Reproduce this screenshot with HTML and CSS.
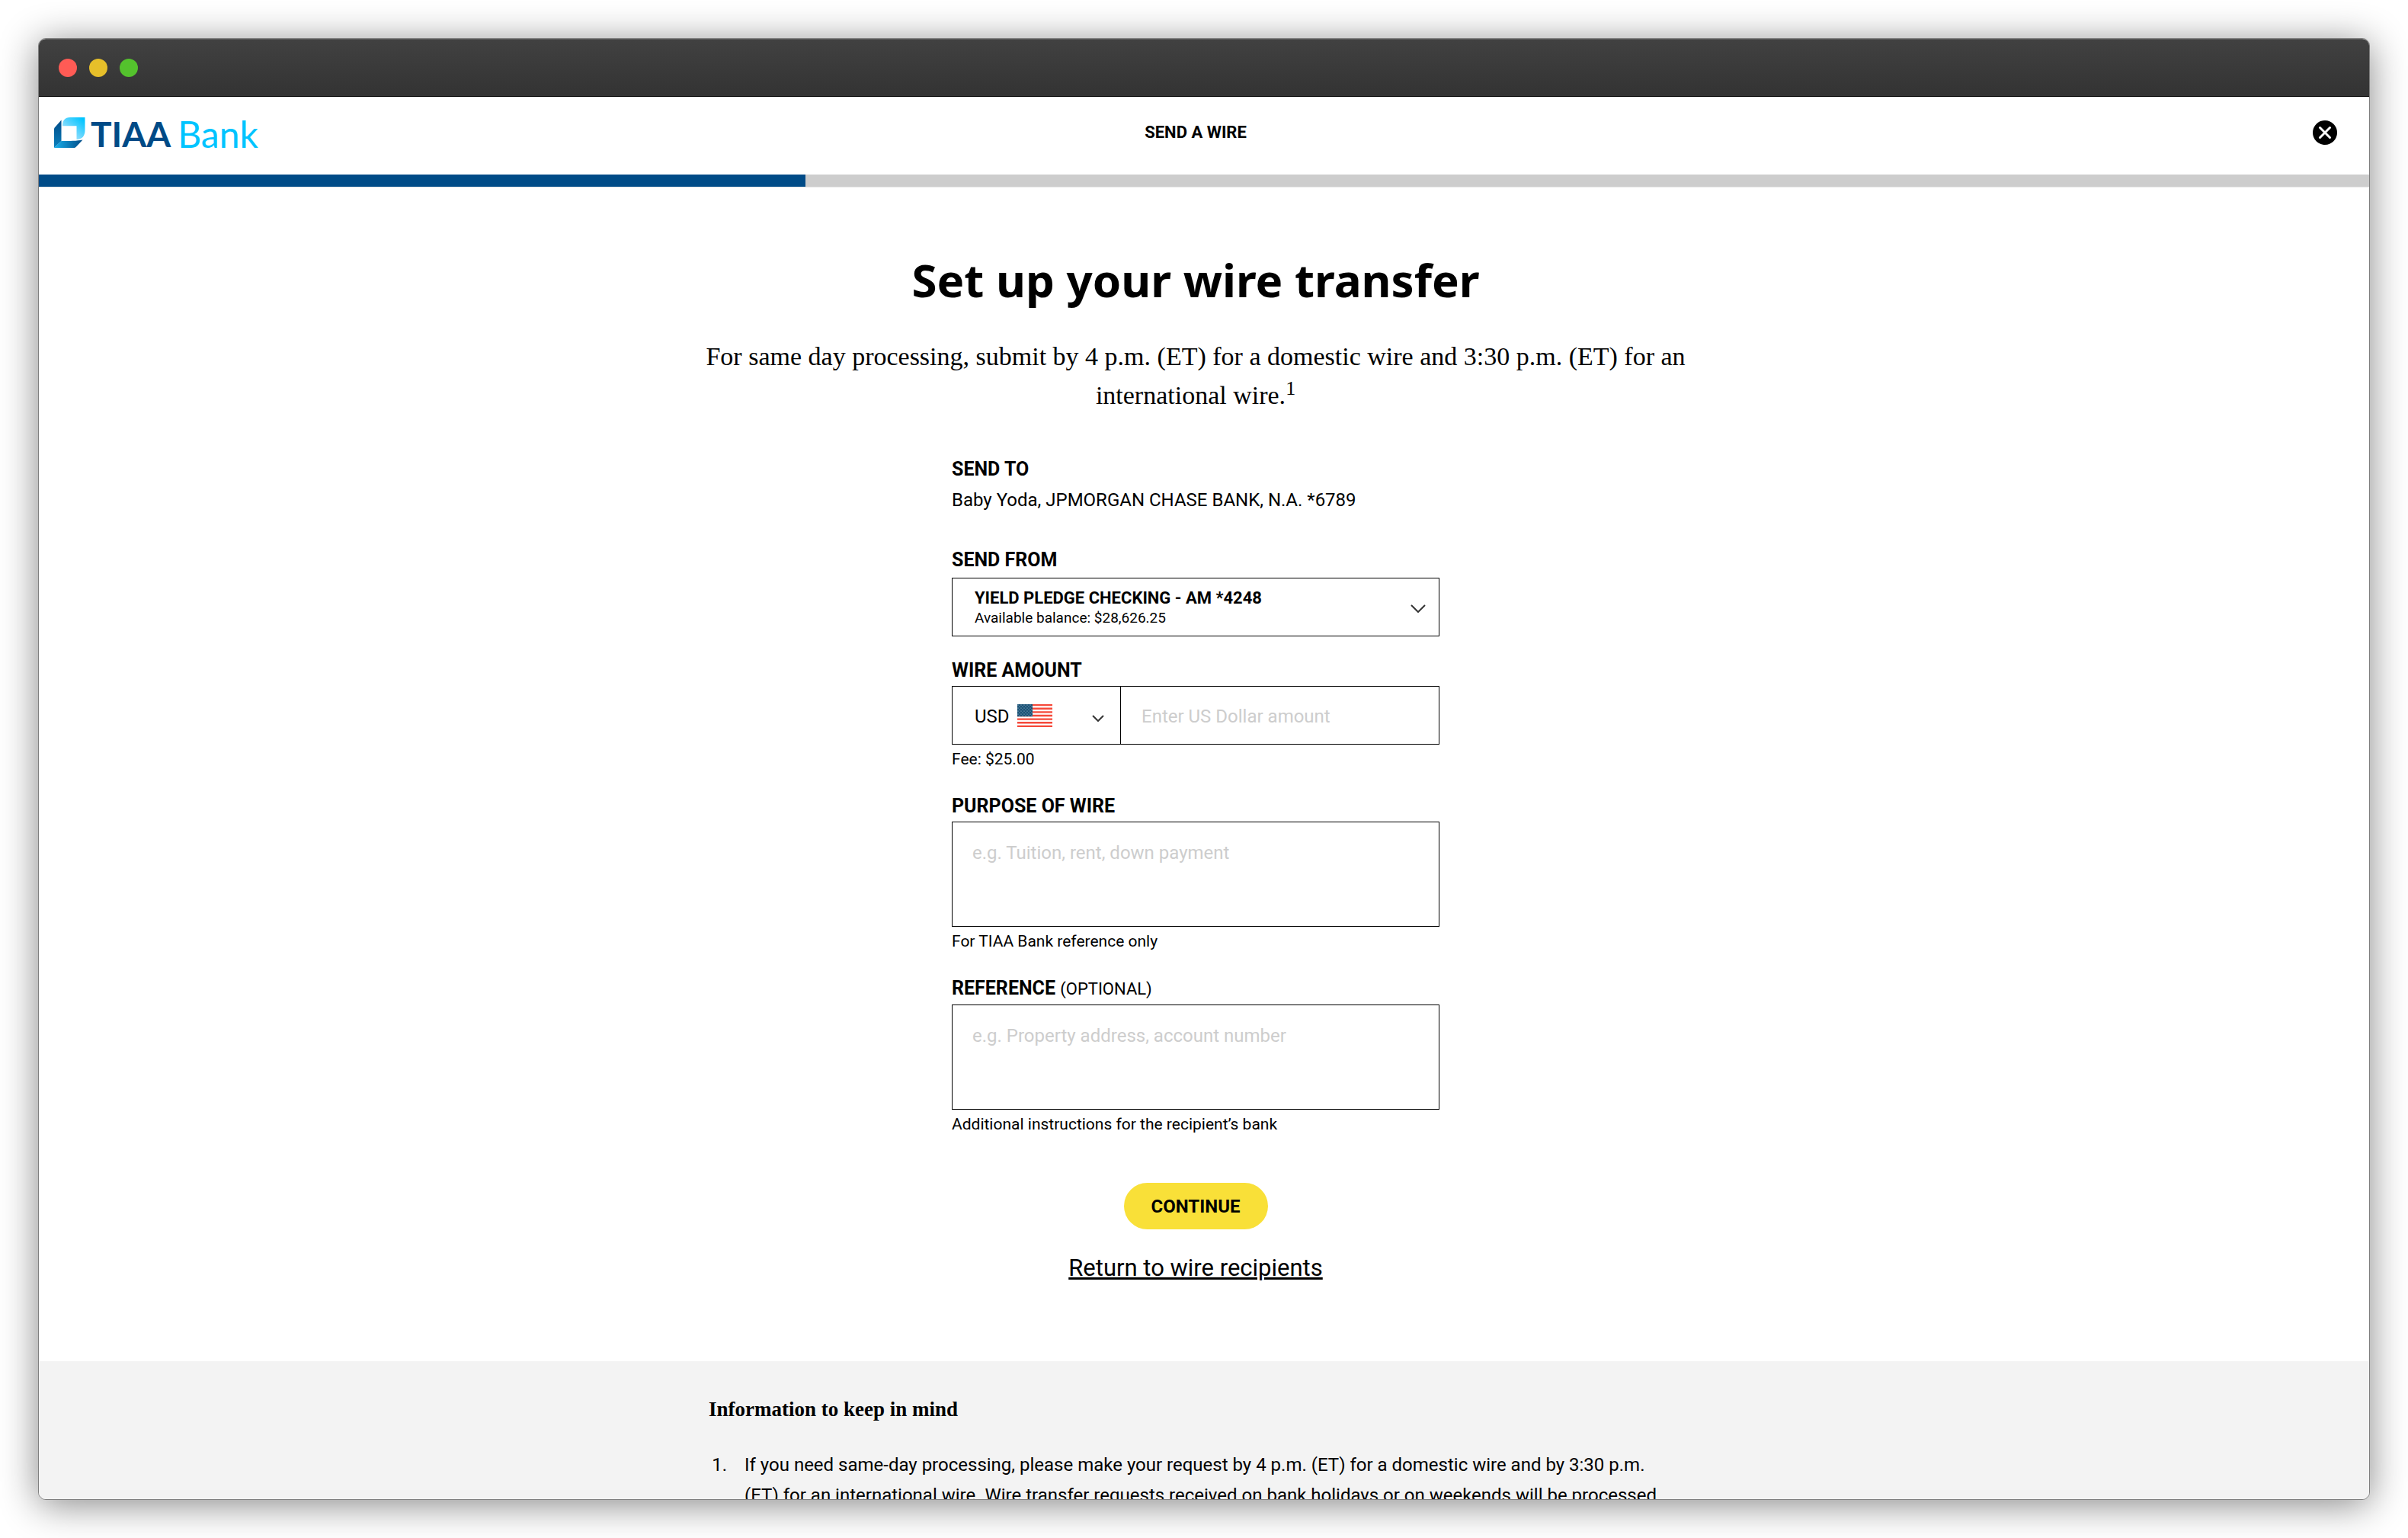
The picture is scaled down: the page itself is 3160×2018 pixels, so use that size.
FILE: index.html
```html
<!DOCTYPE html>
<html lang="en">
<head>
  <meta charset="utf-8">
  <meta name="viewport" content="width=device-width, initial-scale=1">
  <title>Send a wire - TIAA Bank</title>
  <link rel="stylesheet" href="styles.css">
</head>
<body>
  <div class="window">
    <div class="titlebar">
      <span class="light light-red"></span>
      <span class="light light-yellow"></span>
      <span class="light light-green"></span>
    </div>
    <div class="page">
      <header class="header">
        <a class="logo" href="#" aria-label="TIAA Bank">
          <svg class="logo-mark" viewBox="0 0 41 40" aria-hidden="true">
            <defs>
              <linearGradient id="mark-top" x1="1" y1="0" x2="0.2" y2="0.9">
                <stop offset="0.1" stop-color="#00c4ff"/>
                <stop offset="1" stop-color="#b4e4fd"/>
              </linearGradient>
              <linearGradient id="mark-side" x1="0" y1="0" x2="0" y2="1">
                <stop offset="0" stop-color="#004b87"/>
                <stop offset="1" stop-color="#0a80bd"/>
              </linearGradient>
              <linearGradient id="mark-base" x1="0" y1="0" x2="1" y2="0">
                <stop offset="0" stop-color="#18b0ec"/>
                <stop offset="1" stop-color="#004b87"/>
              </linearGradient>
            </defs>
            <path fill="url(#mark-top)" d="M11 11.3C11 4 14 0 21 0H40.500V17C40.500 24 37 29 29.500 29V11.300Z"/>
            <path fill="url(#mark-side)" d="M9.500 3.500V31L0 40V15.500C0 14 1 13 2 12Z"/>
            <path fill="url(#mark-base)" d="M0 40L9.500 31C20 31 30 31 37.500 29.500L29 38.500C28 39.500 27 40 25.500 40Z"/>
          </svg>
          <span class="logo-name">TIAA</span>
          <span class="logo-bank">Bank</span>
        </a>
        <p class="header-title">SEND A WIRE</p>
        <button class="close" type="button" aria-label="Close">
          <svg viewBox="0 0 32 32" aria-hidden="true">
            <circle cx="16" cy="16" r="16"/>
            <path d="M9.500 9.500L22.500 22.500M22.500 9.500L9.500 22.500" fill="none" stroke="#fff" stroke-width="3" stroke-linecap="round"/>
          </svg>
        </button>
      </header>
      <div class="progress" role="progressbar" aria-label="Wire setup" aria-valuenow="33" aria-valuemin="0" aria-valuemax="100">
        <div class="progress-bar" style="width: 32.9%"></div>
      </div>

      <main class="main">
        <h1 class="title">Set up your wire transfer</h1>
        <p class="intro">For same day processing, submit by 4 p.m. (ET) for a domestic wire and 3:30 p.m. (ET) for an international wire.<sup class="note">1</sup></p>

        <form class="form">
          <div class="recipient">
            <h2 class="label">SEND TO</h2>
            <p class="recipient-name">Baby Yoda, JPMORGAN CHASE BANK, N.A. *6789</p>
          </div>

          <div class="field field-from">
            <label class="label" for="from">SEND FROM</label>
            <div class="picker picker-account">
              <select class="box account" id="from" aria-describedby="balance">
                <option>YIELD PLEDGE CHECKING - AM *4248</option>
              </select>
              <span class="balance" id="balance">Available balance: $28,626.25</span>
              <svg class="chevron chevron-large" viewBox="0 0 20 11" aria-hidden="true"><path d="M1 1L10 10L19 1"/></svg>
            </div>
          </div>

          <div class="field">
            <label class="label" for="amount">WIRE AMOUNT</label>
            <div class="amount">
              <div class="picker">
                <select class="box currency" aria-label="Currency">
                  <option>USD</option>
                </select>
                <svg class="flag" viewBox="0 0 46 30" aria-hidden="true">
                  <defs>
                    <pattern id="stars" width="4" height="4" patternUnits="userSpaceOnUse">
                      <circle cx="1" cy="1" r="0.600" fill="#b5cfdc"/>
                      <circle cx="3" cy="3" r="0.600" fill="#b5cfdc"/>
                    </pattern>
                  </defs>
                  <path fill="#fff" d="M0 0H46V30H0Z"/>
                  <path stroke="#f5493a" stroke-width="2.308" d="M0 1.154H46M0 5.769H46M0 10.385H46M0 15H46M0 19.615H46M0 24.231H46M0 28.846H46"/>
                  <path fill="#1a5276" d="M0 0H20V16.150H0Z"/>
                  <path fill="url(#stars)" d="M0 0H20V16.150H0Z"/>
                </svg>
                <svg class="chevron chevron-small" viewBox="0 0 16 9" aria-hidden="true"><path d="M1 1L8 8L15 1"/></svg>
              </div>
              <input class="box amount-input" id="amount" type="text" placeholder="Enter US Dollar amount">
            </div>
            <p class="help">Fee: $25.00</p>
          </div>

          <div class="field">
            <label class="label" for="purpose">PURPOSE OF WIRE</label>
            <textarea class="box memo" id="purpose" placeholder="e.g. Tuition, rent, down payment"></textarea>
            <p class="help">For TIAA Bank reference only</p>
          </div>

          <div class="field">
            <label class="label" for="reference">REFERENCE <span class="optional">(OPTIONAL)</span></label>
            <textarea class="box memo" id="reference" placeholder="e.g. Property address, account number"></textarea>
            <p class="help">Additional instructions for the recipient’s bank</p>
          </div>

          <div class="actions">
            <button class="continue" type="submit">CONTINUE</button>
            <a class="return" href="#">Return to wire recipients</a>
          </div>
        </form>
      </main>

      <footer class="footer">
        <div class="footer-inner">
          <h2 class="footer-title">Information to keep in mind</h2>
          <ol class="footnotes">
            <li>If you need same-day processing, please make your request by 4 p.m. (ET) for a domestic wire and by 3:30 p.m. (ET) for an international wire. Wire transfer requests received on bank holidays or on weekends will be processed</li>
          </ol>
        </div>
      </footer>
    </div>
  </div>
</body>
</html>
```
FILE: styles.css
```css
*,
*::before,
*::after {
  box-sizing: border-box;
}

body {
  margin: 0;
  height: 100vh;
  padding: 50px;
  background: #fff;
  color: #000;
  font: 24px/40px Roboto, "Liberation Sans", sans-serif;
}

h1,
h2,
p,
ol {
  margin: 0;
}

/* Window frame */
.window {
  display: flex;
  flex-direction: column;
  height: 100%;
  overflow: hidden;
  border: 1px solid #7f7f7f;
  border-radius: 10px;
  background: #fff;
  box-shadow: 0 6px 50px rgba(0, 0, 0, 0.48);
}

.titlebar {
  display: flex;
  flex: none;
  align-items: center;
  gap: 16px;
  height: 76px;
  padding-left: 26px;
  border-top: 1px solid #5c5c5c;
  border-bottom: 1px solid #000;
  background: linear-gradient(#414141, #333);
}

.light {
  width: 24px;
  height: 24px;
  border-radius: 50%;
}

.light-red {
  background: #ff5b55;
}

.light-yellow {
  background: #e6bf2a;
}

.light-green {
  background: #54c22d;
}

.page {
  flex: 1;
  min-height: 0;
  overflow: hidden;
}

/* Header */
.header {
  display: grid;
  grid-template-columns: 1fr auto 1fr;
  align-items: center;
  height: 102px;
  padding: 0 42px 8px 20px;
}

.logo {
  display: flex;
  align-items: center;
  justify-self: start;
  font: 46px/40px Lato, sans-serif;
  text-decoration: none;
}

.logo-mark {
  width: 41px;
  height: 40px;
  margin-right: 7px;
}

.logo-name,
.logo-bank {
  padding-top: 4px;
}

.logo-name {
  margin-right: 9px;
  color: #004b87;
  font-weight: 700;
}

.logo-bank {
  color: #00c4ff;
  font-size: 48px;
}

.header-title {
  font-size: 22px;
  font-weight: 700;
}

.close {
  display: block;
  justify-self: end;
  width: 32px;
  height: 32px;
  padding: 0;
  border: 0;
  background: none;
}

.close svg {
  display: block;
}

.progress {
  height: 17px;
  border-bottom: 1px solid #e6e6e6;
  background: #cdcdcd;
}

.progress-bar {
  height: 16px;
  background: #004b87;
}

/* Main column */
.main {
  display: flex;
  flex-direction: column;
  align-items: center;
  padding: 85px 22px 102px 0;
}

.title {
  font: 700 60px/72px "Noto Sans", sans-serif;
}

.intro {
  max-width: 1300px;
  margin-top: 39px;
  font: 34px/51px "Liberation Serif", serif;
  text-align: center;
}

.note {
  font-size: 26px;
  line-height: 0;
}

.form {
  width: 640px;
  max-width: 100%;
  margin-top: 52px;
}

.label {
  display: block;
  font-size: 25px;
  font-weight: 700;
  line-height: 40px;
}

.optional {
  font-size: 22px;
  font-weight: 400;
}

.field {
  margin-top: 27px;
}

.field-from {
  margin: 39px 0 25px;
}

.field-from + .field {
  margin-top: 0;
}

.box {
  display: block;
  width: 100%;
  height: 77px;
  margin: 0;
  border: 1px solid #000;
  border-radius: 0;
  outline: 0;
  background: #fff;
  color: #000;
  font: 24px/32px Roboto, "Liberation Sans", sans-serif;
  appearance: none;
}

.box::placeholder {
  color: #cdcdcd;
  opacity: 1;
}

/* Drop-downs: the select fills the cell, its extras share it */
.picker {
  display: grid;
}

.picker > * {
  grid-area: 1 / 1;
}

.picker-account {
  margin-top: 3px;
}

.account {
  padding: 0 60px 24px 29px;
  font-size: 22px;
  font-weight: 700;
}

.balance {
  align-self: end;
  justify-self: start;
  margin: 0 0 12px 30px;
  font-size: 19px;
  line-height: 24px;
  pointer-events: none;
}

.chevron {
  align-self: center;
  justify-self: end;
  fill: none;
  stroke: #333;
  stroke-width: 2;
  pointer-events: none;
}

.chevron-large {
  width: 20px;
  height: 11px;
  margin: 4px 18px 0 0;
}

.chevron-small {
  width: 16px;
  height: 9px;
  margin: 8px 21px 0 0;
}

.amount {
  display: grid;
  grid-template-columns: 221px 1fr;
}

.currency {
  padding: 2px 0 0 29px;
  border-right: 0;
}

.flag {
  align-self: center;
  width: 46px;
  height: 30px;
  margin-left: 86px;
  pointer-events: none;
}

.amount-input {
  padding: 2px 27px 0;
}

.memo {
  height: 138px;
  padding: 24px 26px;
  resize: none;
}

.help {
  margin-top: 4px;
  font-size: 21px;
  line-height: 30px;
}

.actions {
  display: flex;
  flex-direction: column;
  align-items: center;
  gap: 31px;
  margin-top: 62px;
}

.continue {
  height: 61px;
  padding: 0 36px;
  border: 0;
  border-radius: 31px;
  background: #f9e038;
  color: #000;
  font: 700 24px/40px Roboto, "Liberation Sans", sans-serif;
}

.return {
  color: #000;
  font-size: 31px;
  text-decoration-thickness: 3px;
}

/* Footnotes */
.footer {
  padding: 43px 22px 60px 0;
  background: #f3f3f3;
}

.footer-inner {
  max-width: 1278px;
  margin: 0 auto;
}

.footer-title {
  font: 700 27px/40px "Liberation Serif", serif;
}

.footnotes {
  margin-top: 33px;
  padding: 0 12px 0 30px;
}

.footnotes li {
  padding-left: 17px;
}
```
